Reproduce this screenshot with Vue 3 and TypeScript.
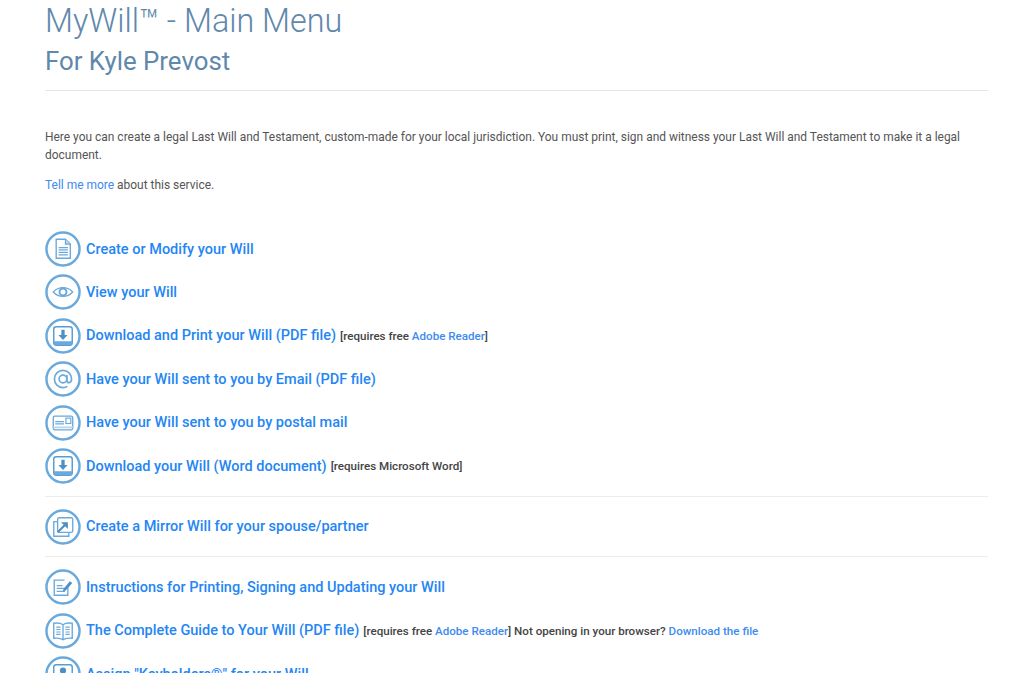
<script setup lang="ts">
type Part = { t: string; link?: boolean };
type Item = { icon: string; label: string; note?: Part[] };
const reader: Part[] = [{ t: '[requires free ' }, { t: 'Adobe Reader', link: true }, { t: ']' }];
const groups: Item[][] = [
  [
    { icon: 'doc', label: 'Create or Modify your Will' },
    { icon: 'eye', label: 'View your Will' },
    { icon: 'down', label: 'Download and Print your Will (PDF file)', note: reader },
    { icon: 'at', label: 'Have your Will sent to you by Email (PDF file)' },
    { icon: 'card', label: 'Have your Will sent to you by postal mail' },
    { icon: 'down', label: 'Download your Will (Word document)', note: [{ t: '[requires Microsoft Word]' }] },
  ],
  [{ icon: 'mirror', label: 'Create a Mirror Will for your spouse/partner' }],
  [
    { icon: 'sign', label: 'Instructions for Printing, Signing and Updating your Will' },
    {
      icon: 'book',
      label: 'The Complete Guide to Your Will (PDF file)',
      note: [...reader, { t: ' Not opening in your browser? ' }, { t: 'Download the file', link: true }],
    },
    { icon: 'key', label: 'Assign "Keyholders®" for your Will' },
  ],
];
</script>

<template>
  <div class="page">
    <h1 class="title">MyWill™ - Main Menu</h1>
    <h2 class="subtitle">For Kyle Prevost</h2>
    <hr class="rule head-rule" />
    <p class="intro">Here you can create a legal Last Will and Testament, custom-made for your local jurisdiction. You must print, sign and witness your Last Will and Testament to make it a legal document.</p>
    <p class="intro more"><a class="link">Tell me more</a> about this service.</p>
    <div class="menu">
      <template v-for="(group, g) in groups" :key="g">
        <hr v-if="g > 0" class="rule group-rule" />
        <div class="group">
          <div v-for="item in group" :key="item.label" class="row">
            <svg class="icon" viewBox="0 0 37 37" fill="none" stroke="#6aa9dc" stroke-width="1.2">
              <circle cx="18.5" cy="18.5" r="17" stroke-width="2.5" />
              <g v-if="item.icon === 'doc'">
                <path d="M11.5 8.5h9.5l5 5V28H11.5z" stroke-width="1.4" />
                <path d="M21 8.5v5h5" fill="#bcd8ef" />
                <path d="M14 17h9.5M14 19.5h9.5M14 22h9.5M14 24.5h9.5" stroke-width="1.3" />
              </g>
              <g v-else-if="item.icon === 'eye'">
                <path d="M8.5 18.5c5.500-6 14.500-6 20 0-5.500 6-14.500 6-20 0z" stroke-width="1.3" />
                <circle cx="18.5" cy="18.5" r="3.6" stroke-width="2" />
              </g>
              <g v-else-if="item.icon === 'down'">
                <rect x="9" y="9" width="19" height="19" rx="2.5" stroke="#5b9ad0" stroke-width="1.5" />
                <path d="M9 24h19v2.5a1.5 1.5 0 0 1-1.5 1.5h-16a1.5 1.5 0 0 1-1.5-1.5z" fill="#6aa9dc" stroke="none" />
                <path d="M16.8 12h3.4v5.5h3l-4.7 5-4.7-5h3z" fill="#4f8fc6" stroke="none" />
              </g>
              <g v-else-if="item.icon === 'at'">
                <circle cx="18.5" cy="18.5" r="4" stroke-width="1.7" />
                <path d="M22.5 14.5v5.700c0 3 4.800 3 4.800-1.700 0-5-3.800-8.800-8.800-8.800s-8.800 3.800-8.800 8.800 3.800 8.800 8.800 8.800c1.800 0 3.300-.4 4.500-1.200" stroke-width="1.7" />
              </g>
              <g v-else-if="item.icon === 'card'">
                <rect x="8.5" y="11.5" width="20" height="14" rx="1.5" stroke-width="1.4" />
                <rect x="21.5" y="13.5" width="5" height="5.5" />
                <path d="M10.5 17h9M10.5 19.5h9" stroke-width="1.3" />
                <path d="M8.5 23h20" stroke="#bcd8ef" stroke-width="2" />
              </g>
              <g v-else-if="item.icon === 'mirror'">
                <rect x="13" y="9" width="15.5" height="15" rx="1.5" stroke-width="1.4" />
                <path d="M13 13H9v15h15.5v-4" stroke-width="1.4" />
                <path d="M13 24l7.5-7.5" stroke="#4f8fc6" stroke-width="2.2" />
                <path d="M16.5 13.5h7V20.5z" fill="#4f8fc6" stroke="none" />
              </g>
              <g v-else-if="item.icon === 'sign'">
                <path d="M23.5 17v10H9.5V11.5H20" stroke-width="1.4" />
                <path d="M12 17h6M12 20h8.5M12 23h8.5" stroke-width="1.3" />
                <path d="M19 20.5l6.5-8 2.5 2-6.700 7.500-3 1z" fill="#4f8fc6" stroke="none" />
              </g>
              <g v-else-if="item.icon === 'book'">
                <path d="M18.5 12c-2-1.600-5-2-9.500-1.500V26c4.500-.5 7.500 0 9.500 1.500 2-1.500 5-2 9.500-1.500V10.500c-4.500-.5-7.500-.1-9.500 1.500zM18.5 12v15.500" stroke-width="1.4" />
                <path d="M11.5 14.5h4.5M11.5 17h4.5M11.5 19.5h4.5M11.5 22h4.5M21 14.5h4.5M21 17h4.5M21 19.5h4.5M21 22h4.5" />
              </g>
              <g v-else>
                <rect x="9" y="9" width="19" height="19" rx="2.5" stroke="#5b9ad0" stroke-width="1.5" />
                <circle cx="18.5" cy="15" r="3.2" fill="#4f8fc6" stroke="none" />
                <path d="M17.3 17h2.4v6.5h-2.4z" fill="#4f8fc6" stroke="none" />
              </g>
            </svg>
            <a class="label">{{ item.label }}</a>
            <span v-if="item.note" class="note"><template v-for="(p, i) in item.note" :key="i"><a v-if="p.link" class="link">{{ p.t }}</a><template v-else>{{ p.t }}</template></template></span>
          </div>
        </div>
      </template>
    </div>
  </div>
</template>

<style>
html, body { margin: 0; background: #fff; }
</style>

<style scoped>
.page {
  height: 673px;
  overflow: hidden;
  box-sizing: border-box;
  padding: 0 36px 0 45px;
  font-family: Roboto, "Liberation Sans", sans-serif;
  color: #555;
}
.title {
  margin: 0;
  font-size: 32.3px;
  line-height: 43px;
  font-weight: 300;
  color: #5f88ab;
}
.subtitle {
  margin: 1px 0 0;
  font-size: 25.8px;
  line-height: 34px;
  font-weight: 400;
  color: #5f88ab;
}
.rule { margin: 0; border: 0; border-top: 1px solid #e6e6e6; }
.head-rule { margin-top: 12px; }
.intro {
  margin: 37px 0 0;
  font-size: 11.96px;
  line-height: 18px;
}
.more { margin-top: 12px; }
.link { color: #3d8bf0; }
.menu { margin-top: 36.6px; }
.group { display: flex; flex-direction: column; gap: 6.4px; }
.group-rule { margin: 11px 0 11.6px; border-top-color: #ececec; }
.row { display: flex; align-items: center; height: 37px; }
.icon { width: 36px; height: 36px; flex: none; }
.label {
  margin-left: 5px;
  font-size: 14.5px;
  font-weight: 500;
  color: #2486f4;
  white-space: nowrap;
}
.note {
  margin-left: 4px;
  font-size: 11.6px;
  font-weight: 500;
  color: #444;
  white-space: nowrap;
}
</style>
